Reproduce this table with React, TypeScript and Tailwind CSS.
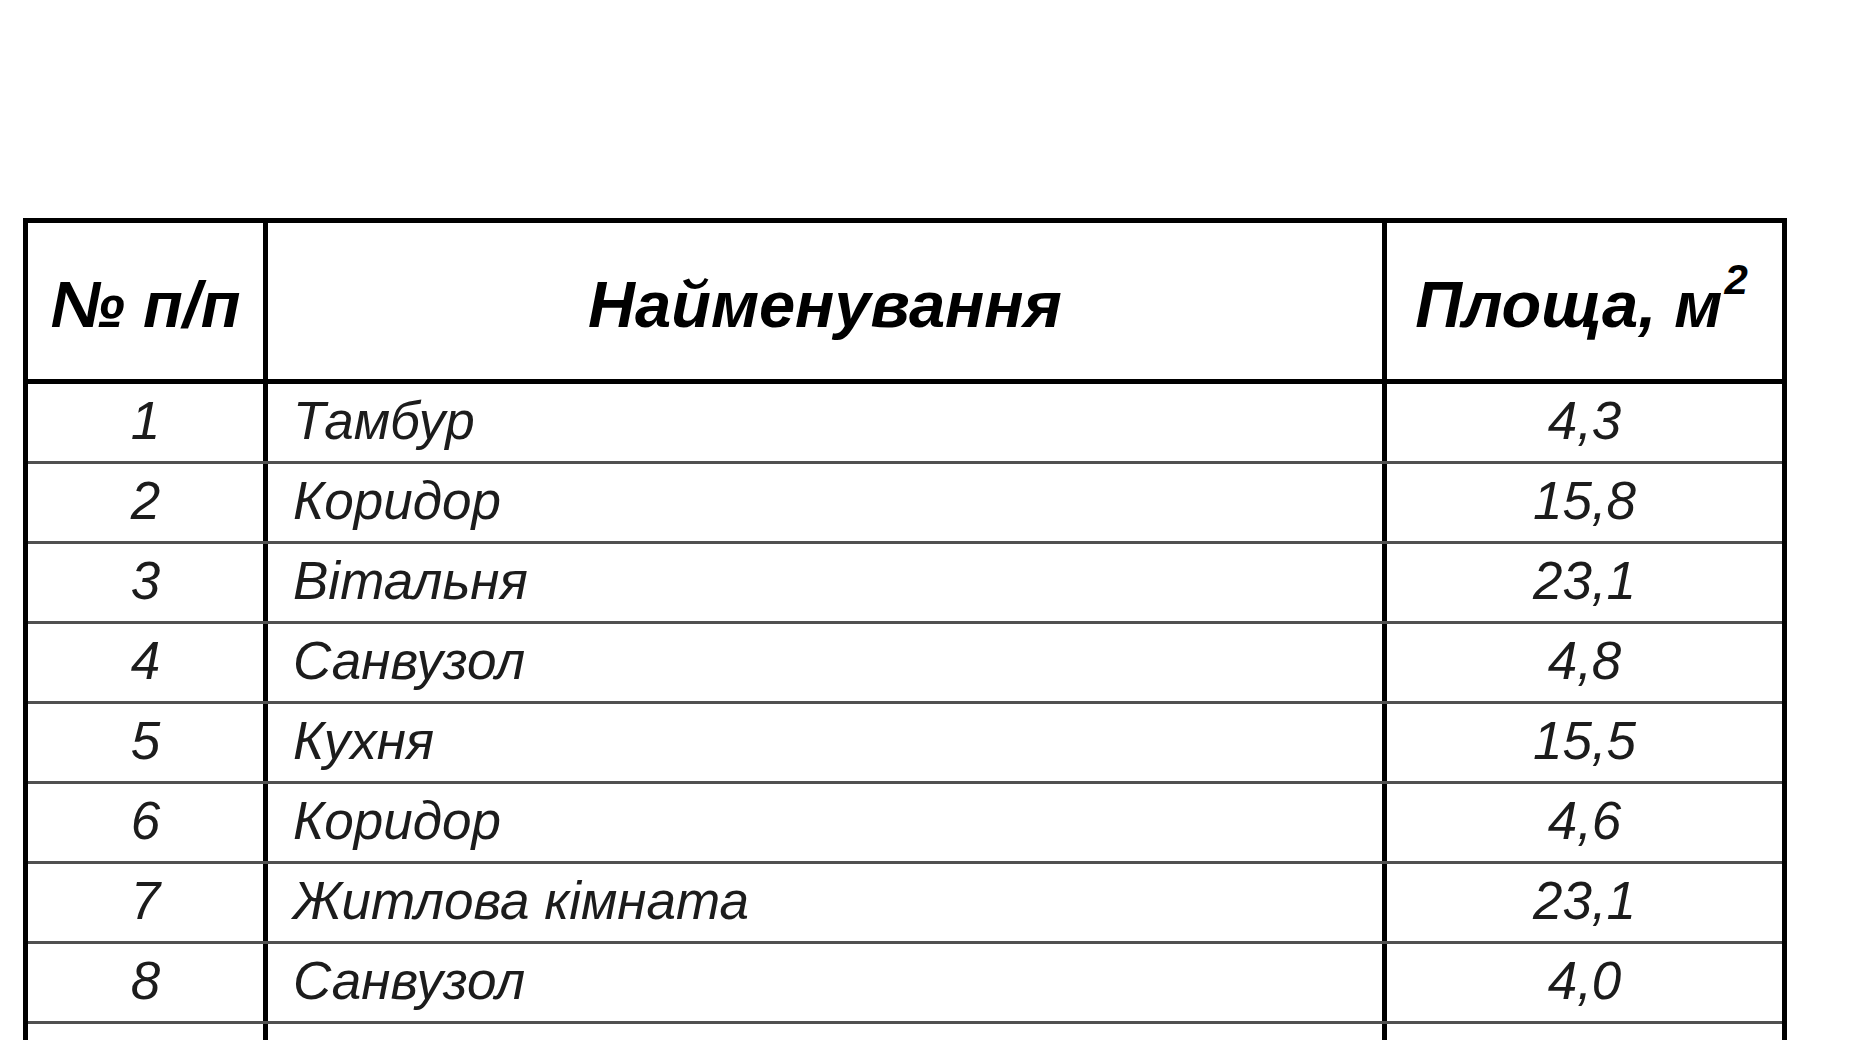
import React from "react";

const rows: [string, string, string][] = [
  ["1", "Тамбур", "4,3"],
  ["2", "Коридор", "15,8"],
  ["3", "Вітальня", "23,1"],
  ["4", "Санвузол", "4,8"],
  ["5", "Кухня", "15,5"],
  ["6", "Коридор", "4,6"],
  ["7", "Житлова кімната", "23,1"],
  ["8", "Санвузол", "4,0"],
  ["9", "Житлова кімната", "12,6"],
];

export default function App() {
  return (
    <div
      className="w-[1850px] h-[1040px] overflow-hidden bg-white"
      style={{ fontFamily: '"Liberation Sans", Arial, sans-serif' }}
    >
      <div className="pt-[218px] pl-[23px]">
        <div className="w-[1764px] border-x-[5px] border-t-[5px] border-black">
          <div className="flex h-[161px] border-b-[5px] border-black text-black font-bold italic text-[65px] leading-none">
            <div className="w-[240px] shrink-0 flex items-center justify-center pt-[6px] border-r-[5px] border-black">
              № п/п
            </div>
            <div className="w-[1119px] shrink-0 flex items-center justify-center pt-[6px] border-r-[5px] border-black">
              Найменування
            </div>
            <div className="flex-1 flex items-center justify-center pt-[6px] pr-[6px]">
              Площа, м<sup className="text-[42px] -top-[24px] ml-[2px]">2</sup>
            </div>
          </div>
          {rows.map(([n, name, area]) => (
            <div
              key={n}
              className="flex h-[80px] border-b-[3px] border-[#505050] text-[#1c1c1c] italic text-[53px] leading-none"
            >
              <div className="w-[240px] shrink-0 flex items-center justify-center pb-[4px] border-r-[5px] border-black">
                {n}
              </div>
              <div className="w-[1119px] shrink-0 flex items-center pl-[25px] pb-[4px] border-r-[5px] border-black">
                {name}
              </div>
              <div className="flex-1 flex items-center justify-center pb-[4px]">
                {area}
              </div>
            </div>
          ))}
        </div>
      </div>
    </div>
  );
}
